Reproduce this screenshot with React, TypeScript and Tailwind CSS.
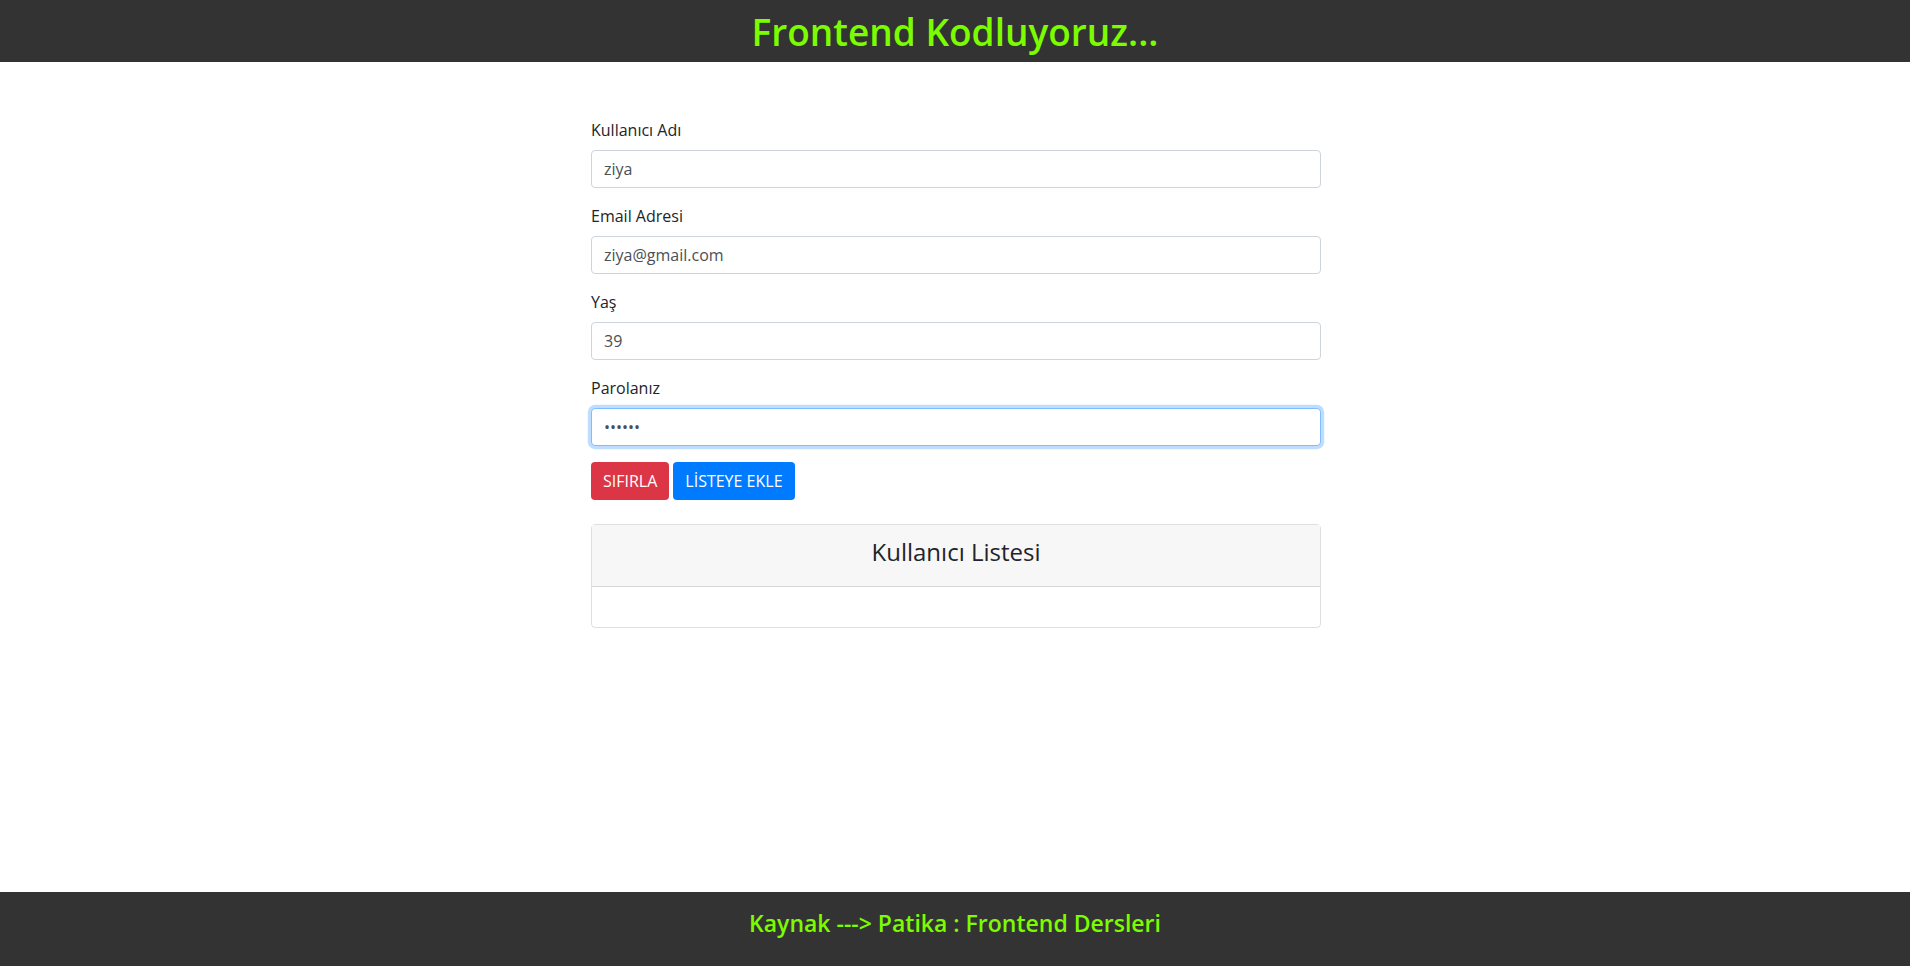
import React from "react";

const font = { fontFamily: '"Open Sans", "Noto Sans", sans-serif' };

interface FieldProps {
  label: string;
  value: string;
  type?: string;
  focused?: boolean;
}

function Field({ label, value, type = "text", focused = false }: FieldProps) {
  return (
    <div className="mb-4">
      <label className="mb-2 block text-base leading-6 text-[#212529]">{label}</label>
      <input
        type={type}
        value={value}
        readOnly
        className={
          focused
            ? "block h-[38px] w-full rounded border border-[#80bdff] bg-white px-3 text-base text-[#495057] outline-none shadow-[0_0_0_3.2px_rgba(0,123,255,0.25)]"
            : "block h-[38px] w-full rounded border border-[#ced4da] bg-white px-3 text-base text-[#495057] outline-none"
        }
        style={font}
      />
    </div>
  );
}

export default function App() {
  return (
    <div className="flex min-h-screen flex-col bg-white" style={font}>
      <header className="flex h-[62px] items-center justify-center bg-[#333333]">
        <h1 className="text-[37px] font-semibold leading-none text-[#7cfc00]">Frontend Kodluyoruz...</h1>
      </header>

      <main className="flex-1 pl-0.5">
        <div className="mx-auto mt-14 w-[730px]">
          <form>
            <Field label="Kullanıcı Adı" value="ziya" />
            <Field label="Email Adresi" value="ziya@gmail.com" />
            <Field label="Yaş" value="39" />
            <Field label="Parolanız" value="ziya12" type="password" focused />
            <div className="flex gap-1">
              <button
                type="button"
                className="h-[38px] rounded bg-[#dc3545] px-3 text-base text-white"
              >
                SIFIRLA
              </button>
              <button
                type="button"
                className="h-[38px] rounded bg-[#007bff] px-3 text-base text-white"
              >
                LİSTEYE EKLE
              </button>
            </div>
          </form>

          <div className="mt-6 rounded border border-[rgba(0,0,0,0.125)]">
            <div className="border-b border-[rgba(0,0,0,0.125)] bg-[#f7f7f7] px-5 pb-5 pt-3 text-center">
              <h4 className="text-2xl font-medium leading-[29px] text-[#212529]">Kullanıcı Listesi</h4>
            </div>
            <div className="h-10" />
          </div>
        </div>
      </main>

      <footer className="flex h-[74px] items-center justify-center bg-[#333333] pb-3">
        <p className="text-[23px] font-semibold leading-none text-[#7cfc00]">Kaynak ---&gt; Patika : Frontend Dersleri</p>
      </footer>
    </div>
  );
}
